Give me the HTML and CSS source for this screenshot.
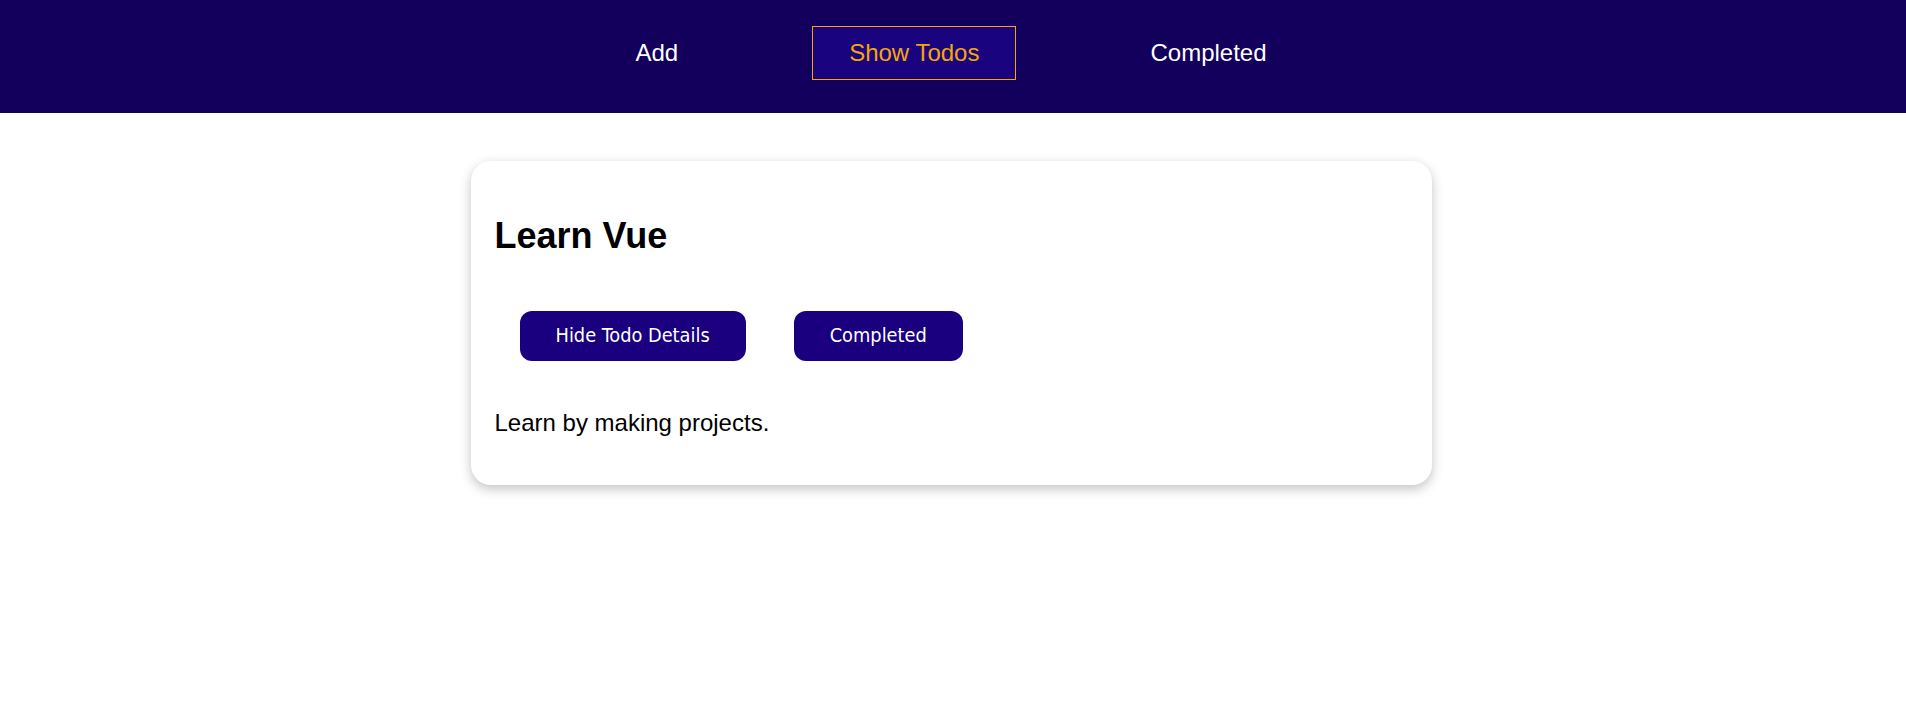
FILE: index.html
```html
<!DOCTYPE html>
<html lang="en">
<head>
<meta charset="utf-8">
<title>Todos</title>
<link rel="stylesheet" href="styles.css">
</head>
<body>
<header class="topbar">
  <nav class="nav">
    <a class="nav-link" href="#">Add</a>
    <a class="nav-link nav-link-active" href="#">Show Todos</a>
    <a class="nav-link" href="#">Completed</a>
  </nav>
</header>
<main class="content">
  <section class="card">
    <h2 class="card-title">Learn Vue</h2>
    <div class="actions">
      <button class="btn" type="button">Hide Todo Details</button>
      <button class="btn" type="button">Completed</button>
    </div>
    <p class="card-text">Learn by making projects.</p>
  </section>
</main>
</body>
</html>
```

FILE: styles.css
```css
html, body {
  margin: 0;
  padding: 0;
  background: #ffffff;
}

body {
  font-family: "Liberation Sans", Arial, sans-serif;
  color: #000000;
}

.topbar {
  background: #12005c;
  padding: 26px 4px 33px 0;
}

.nav {
  display: flex;
  justify-content: center;
  gap: 97px;
}

.nav-link {
  display: block;
  padding: 12px 36px;
  border: 1px solid transparent;
  font-size: 24px;
  line-height: 28px;
  color: #ffffff;
  text-decoration: none;
}

.nav-link-active {
  border-color: #f5a60a;
  background: #1a037e;
  color: #f5a60a;
}

.content {
  padding: 48px 4px 60px 0;
}

.card {
  width: 913px;
  margin: 0 auto;
  padding: 0 24px;
  background: #ffffff;
  border-radius: 20px;
  box-shadow: 0 4px 12px rgba(0, 0, 0, 0.24);
  display: flow-root;
}

.card-title {
  margin: 54px 0 31px;
  font-size: 36px;
  line-height: 41px;
  font-weight: bold;
}

.actions {
  display: flex;
  gap: 48px;
  padding: 24px 0 24px 25px;
}

.btn {
  padding: 14px 36px;
  border: none;
  border-radius: 12px;
  background: #1a007e;
  color: #ffffff;
  font-family: "DejaVu Sans Condensed", "DejaVu Sans", sans-serif;
  font-stretch: condensed;
  font-size: 19.8px;
  line-height: 22px;
  cursor: pointer;
}

.card-text {
  margin: 24px 0;
  padding-bottom: 24px;
  font-size: 24px;
  line-height: 28px;
}
```
